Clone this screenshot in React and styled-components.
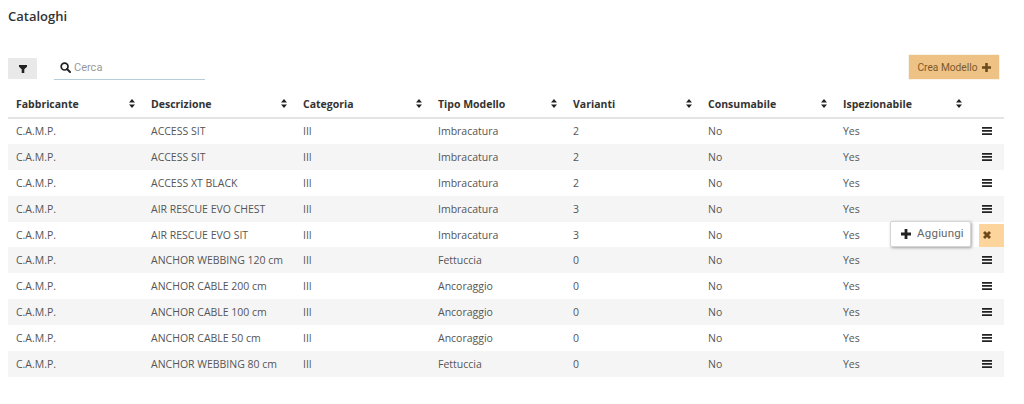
import React from 'react';
import styled, { createGlobalStyle } from 'styled-components';

const rows = [
  ['C.A.M.P.', 'ACCESS SIT', 'III', 'Imbracatura', '2', 'No', 'Yes'],
  ['C.A.M.P.', 'ACCESS SIT', 'III', 'Imbracatura', '2', 'No', 'Yes'],
  ['C.A.M.P.', 'ACCESS XT BLACK', 'III', 'Imbracatura', '2', 'No', 'Yes'],
  ['C.A.M.P.', 'AIR RESCUE EVO CHEST', 'III', 'Imbracatura', '3', 'No', 'Yes'],
  ['C.A.M.P.', 'AIR RESCUE EVO SIT', 'III', 'Imbracatura', '3', 'No', 'Yes'],
  ['C.A.M.P.', 'ANCHOR WEBBING 120 cm', 'III', 'Fettuccia', '0', 'No', 'Yes'],
  ['C.A.M.P.', 'ANCHOR CABLE 200 cm', 'III', 'Ancoraggio', '0', 'No', 'Yes'],
  ['C.A.M.P.', 'ANCHOR CABLE 100 cm', 'III', 'Ancoraggio', '0', 'No', 'Yes'],
  ['C.A.M.P.', 'ANCHOR CABLE 50 cm', 'III', 'Ancoraggio', '0', 'No', 'Yes'],
  ['C.A.M.P.', 'ANCHOR WEBBING 80 cm', 'III', 'Fettuccia', '0', 'No', 'Yes'],
];

const columns = [
  { name: 'Fabbricante', width: 135 },
  { name: 'Descrizione', width: 152 },
  { name: 'Categoria', width: 135 },
  { name: 'Tipo Modello', width: 135 },
  { name: 'Varianti', width: 135 },
  { name: 'Consumabile', width: 135 },
  { name: 'Ispezionabile', width: 135 },
];

const Global = createGlobalStyle`
  body {
    margin: 0;
    background: #fff;
    font-family: "Open Sans", "Noto Sans", sans-serif;
  }
`;

const Page = styled.div`
  padding: 8px 20px 0 8px;
`;

const Title = styled.h1`
  margin: 0;
  font-size: 13px;
  line-height: 17px;
  font-weight: 600;
  color: #333;
`;

const Toolbar = styled.div`
  display: flex;
  align-items: flex-start;
  margin-top: 30px;
  height: 37px;
`;

const FilterButton = styled.button`
  width: 29px;
  height: 21px;
  margin-top: 3px;
  padding: 0;
  display: flex;
  align-items: center;
  justify-content: center;
  border: 0;
  background: #e9e9e9;
`;

const SearchBox = styled.div`
  width: 151px;
  height: 24px;
  margin: 1px 0 0 17px;
  padding-left: 6px;
  box-sizing: border-box;
  display: flex;
  align-items: center;
  gap: 3px;
  border-bottom: 1px solid #b5cdd8;
`;

const SearchLabel = styled.span`
  font-family: "Roboto", "Liberation Sans", sans-serif;
  font-size: 11px;
  color: #999;
`;

const CreateButton = styled.button`
  margin-left: auto;
  margin-right: 5px;
  width: 90px;
  height: 24px;
  padding: 0;
  display: flex;
  align-items: center;
  justify-content: center;
  gap: 4px;
  border: 0;
  background: #eec285;
  box-shadow: 0 0 1px #d9b27a;
  font-family: "Roboto", "Liberation Sans", sans-serif;
  font-size: 10.2px;
  color: #7a5a2c;
`;

const Table = styled.table`
  width: 996px;
  table-layout: fixed;
  border-collapse: collapse;
  font-size: 10.5px;
`;

const HeadCell = styled.th`
  width: ${(p) => p.$width}px;
  box-sizing: border-box;
  height: 26px;
  padding: 0 8px 2px;
  text-align: left;
  font-size: 10.5px;
  font-weight: 700;
  color: #333;
  border-bottom: 2px solid #e4e4e4;
`;

const HeadInner = styled.div`
  display: flex;
  align-items: center;
  justify-content: space-between;
`;

const Row = styled.tr`
  height: 25.9px;
  background: ${(p) => (p.$odd ? '#f5f5f5' : '#fff')};
`;

const Cell = styled.td`
  padding: 0 8px;
  color: #555;
  white-space: nowrap;
`;

const ActionCell = styled.td`
  position: relative;
  padding: 0 12px 0 0;
  text-align: right;
  line-height: 0;
`;

const OpenMark = styled.div`
  position: absolute;
  top: 2px;
  right: 0;
  width: 25px;
  height: 23px;
  padding-left: 4px;
  box-sizing: border-box;
  display: flex;
  align-items: center;
  background: #fdd49b;
`;

const Popup = styled.div`
  position: absolute;
  top: -1px;
  right: 33px;
  width: 81px;
  height: 26px;
  padding-left: 4px;
  box-sizing: border-box;
  display: flex;
  align-items: center;
  justify-content: center;
  gap: 6px;
  background: #fff;
  border: 1px solid #d5d5d5;
  border-radius: 2px;
  box-shadow: 1px 1px 3px rgba(0, 0, 0, 0.35);
  font-family: "Roboto", "Liberation Sans", sans-serif;
  font-size: 11.5px;
  letter-spacing: 0.2px;
  line-height: 1;
  color: #666;
`;

const Sort = () => (
  <svg width="6" height="9" viewBox="0 0 6 9">
    <path d="M3 0 6 3.6H0z M0 5.4h6L3 9z" fill="#222" />
  </svg>
);

const Plus = ({ color = '#222', size = 9 }) => (
  <svg width={size} height={size} viewBox="0 0 10 10">
    <path d="M3.6 0h2.8v3.6H10v2.8H6.4V10H3.6V6.4H0V3.6h3.6z" fill={color} />
  </svg>
);

const Bars = () => (
  <svg width="10" height="8" viewBox="0 0 10 8">
    <path d="M0 0h10v1.7H0z M0 3.1h10v1.7H0z M0 6.2h10v1.7H0z" fill="#222" />
  </svg>
);

const Cross = () => (
  <svg width="8" height="8" viewBox="0 0 8 8">
    <path d="M2 0 4 2 6 0 8 2 6 4 8 6 6 8 4 6 2 8 0 6 2 4 0 2z" fill="#6e4a18" />
  </svg>
);

const Funnel = () => (
  <svg width="8" height="8" viewBox="0 0 8 8">
    <path d="M0 0h8v1.8L5.3 4.2V8H2.7V4.2L0 1.8z" fill="#222" />
  </svg>
);

const Lens = () => (
  <svg width="11" height="11" viewBox="0 0 11 11">
    <circle cx="4.6" cy="4.6" r="3.4" fill="none" stroke="#222" strokeWidth="1.7" />
    <path d="m7 7 3 3" stroke="#222" strokeWidth="2" strokeLinecap="round" />
  </svg>
);

export default function App() {
  return (
    <Page>
      <Global />
      <Title>Cataloghi</Title>
      <Toolbar>
        <FilterButton><Funnel /></FilterButton>
        <SearchBox>
          <Lens />
          <SearchLabel>Cerca</SearchLabel>
        </SearchBox>
        <CreateButton>
          Crea Modello
          <Plus color="#6b4a1c" size={9} />
        </CreateButton>
      </Toolbar>
      <Table>
        <thead>
          <tr>
            {columns.map((c) => (
              <HeadCell key={c.name} $width={c.width}>
                <HeadInner>
                  {c.name}
                  <Sort />
                </HeadInner>
              </HeadCell>
            ))}
            <HeadCell $width={34} />
          </tr>
        </thead>
        <tbody>
          {rows.map((r, i) => (
            <Row key={i} $odd={i % 2 === 1}>
              {r.map((v, j) => (
                <Cell key={j}>{v}</Cell>
              ))}
              <ActionCell>
                {i === 4 ? (
                  <>
                    <Popup><Plus size={10} />Aggiungi</Popup>
                    <OpenMark><Cross /></OpenMark>
                  </>
                ) : (
                  <Bars />
                )}
              </ActionCell>
            </Row>
          ))}
        </tbody>
      </Table>
    </Page>
  );
}
